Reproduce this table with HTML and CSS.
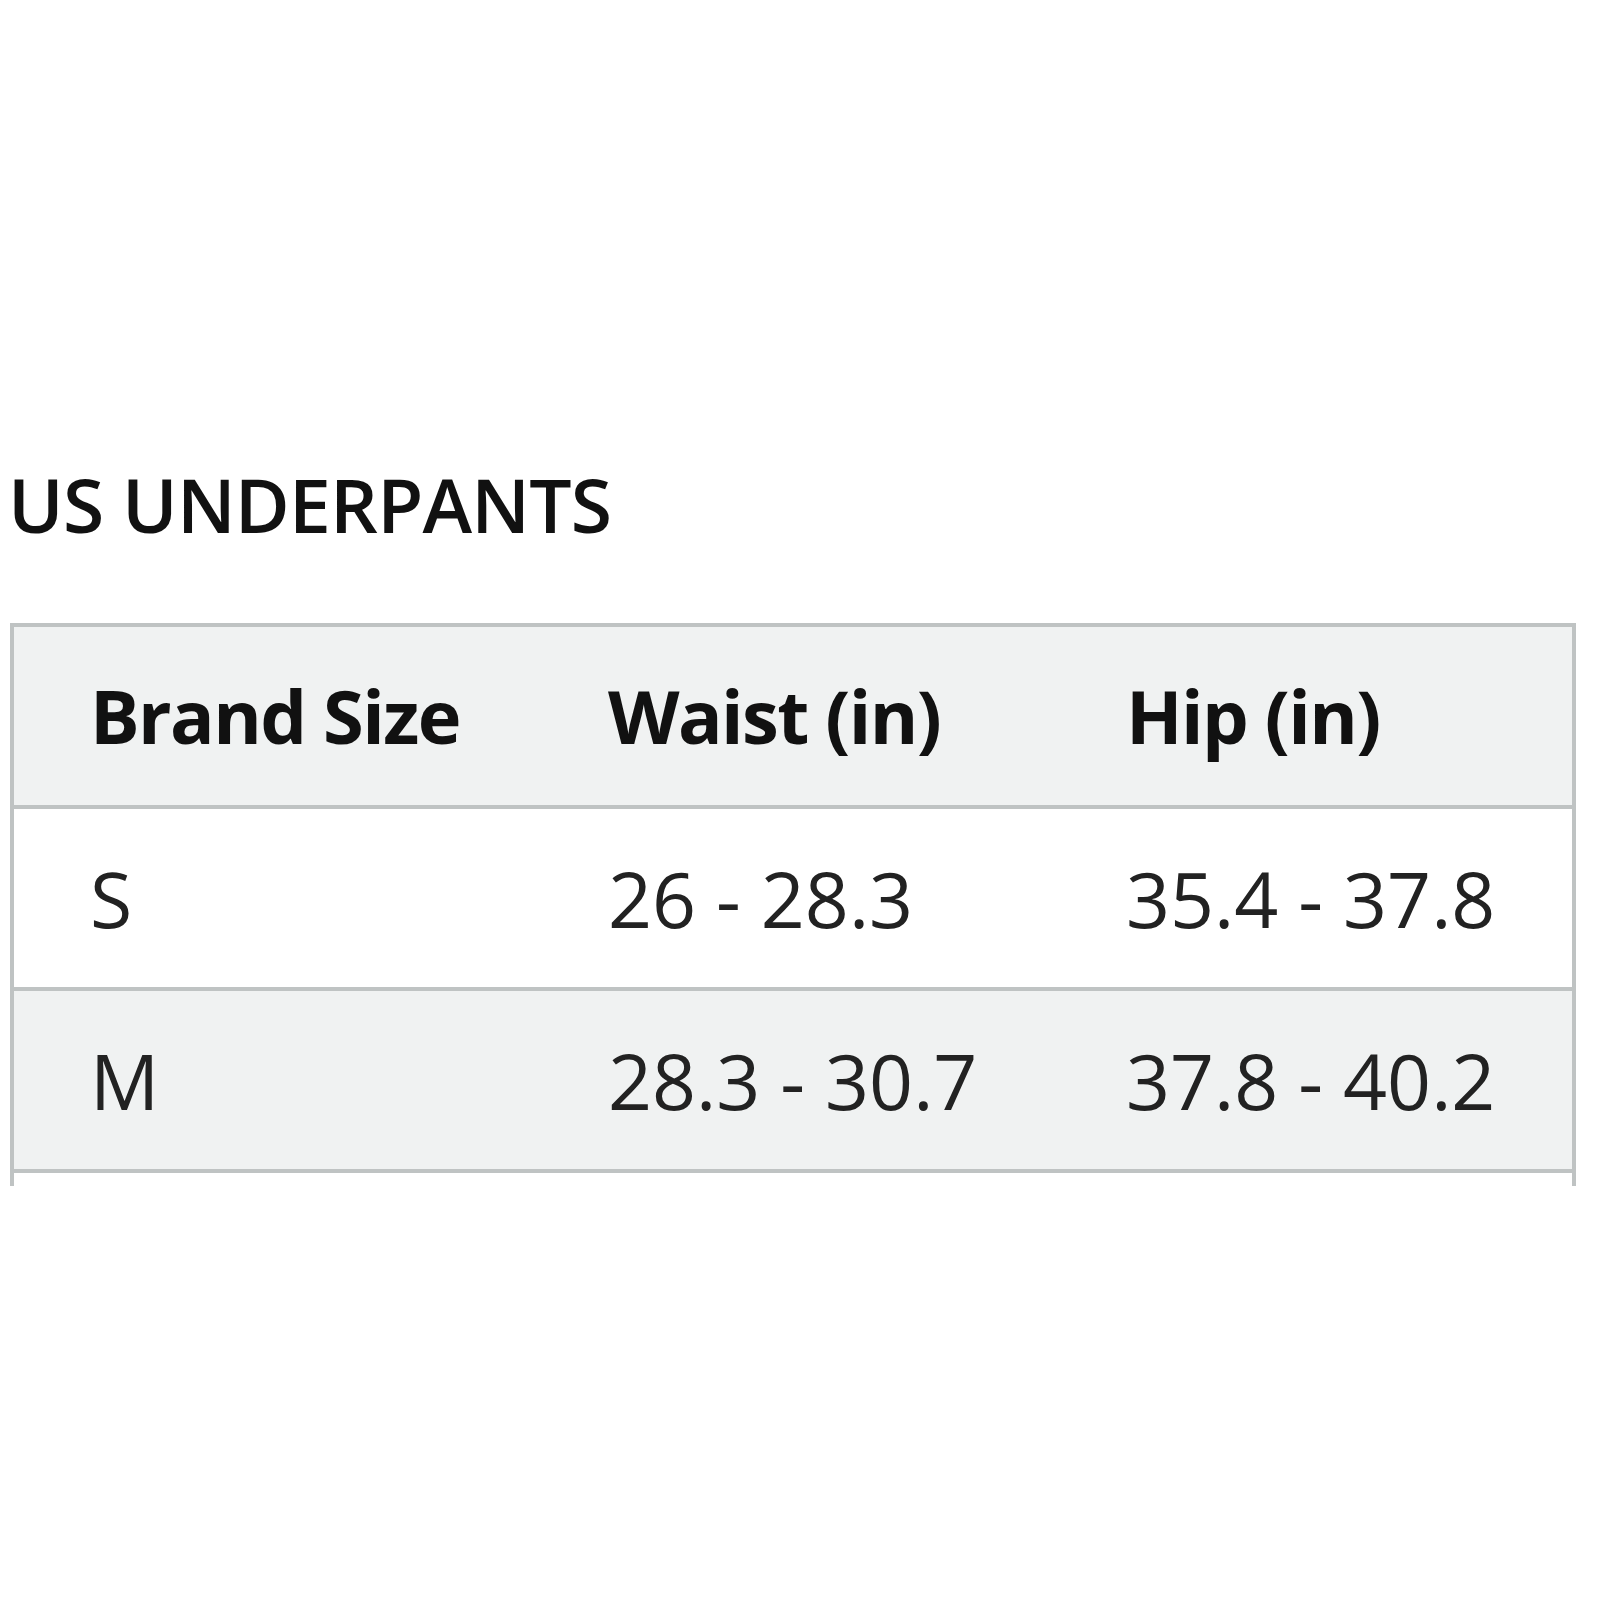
FILE: index.html
```html
<!DOCTYPE html>
<html lang="en">
<head>
<meta charset="utf-8">
<title>US Underpants size chart</title>
<link rel="stylesheet" href="styles.css">
</head>
<body>
<main class="page">
  <h1 class="title">US UNDERPANTS</h1>
  <div class="table-wrap">
    <table class="size-table">
      <colgroup>
        <col class="col-a">
        <col class="col-b">
        <col class="col-c">
      </colgroup>
      <thead>
        <tr class="row-shaded">
          <th>Brand Size</th>
          <th>Waist (in)</th>
          <th>Hip (in)</th>
        </tr>
      </thead>
      <tbody>
        <tr class="row-plain">
          <td>S</td>
          <td>26 - 28.3</td>
          <td>35.4 - 37.8</td>
        </tr>
        <tr class="row-shaded">
          <td>M</td>
          <td>28.3 - 30.7</td>
          <td>37.8 - 40.2</td>
        </tr>
        <tr class="row-plain row-clipped" aria-hidden="true">
          <td></td>
          <td></td>
          <td></td>
        </tr>
      </tbody>
    </table>
  </div>
</main>
</body>
</html>
```

FILE: styles.css
```css
html, body {
  margin: 0;
  padding: 0;
  background: #ffffff;
}

.page {
  width: 1600px;
  height: 1600px;
  padding: 467px 0 0 10px;
  box-sizing: border-box;
  font-family: "Open Sans", "Noto Sans", sans-serif;
  color: #111111;
}

.title {
  margin: 0 0 81px -2px;
  font-size: 75px;
  line-height: 1;
  font-weight: 600;
  letter-spacing: -0.8px;
  color: #111111;
}

.table-wrap {
  width: 1566px;
  height: 563px;
  overflow: hidden;
}

.size-table {
  width: 1566px;
  border-collapse: collapse;
  table-layout: fixed;
  border: 4px solid #bfc3c3;
}

.col-a { width: 518px; }
.col-b { width: 518px; }

.size-table th,
.size-table td {
  height: 178px;
  padding: 0 0 0 78px;
  border: 4px solid #bfc3c3;
  border-left: none;
  border-right: none;
  text-align: left;
  vertical-align: middle;
  line-height: 1;
}

.size-table th:first-child,
.size-table td:first-child {
  padding-left: 76px;
}

.size-table th {
  font-size: 74px;
  font-weight: 700;
  letter-spacing: -1.6px;
  color: #111111;
}

.size-table td {
  font-size: 77px;
  font-weight: 400;
  color: #222222;
}

.row-shaded {
  background: #f0f2f2;
}

.row-plain {
  background: #ffffff;
}
```
